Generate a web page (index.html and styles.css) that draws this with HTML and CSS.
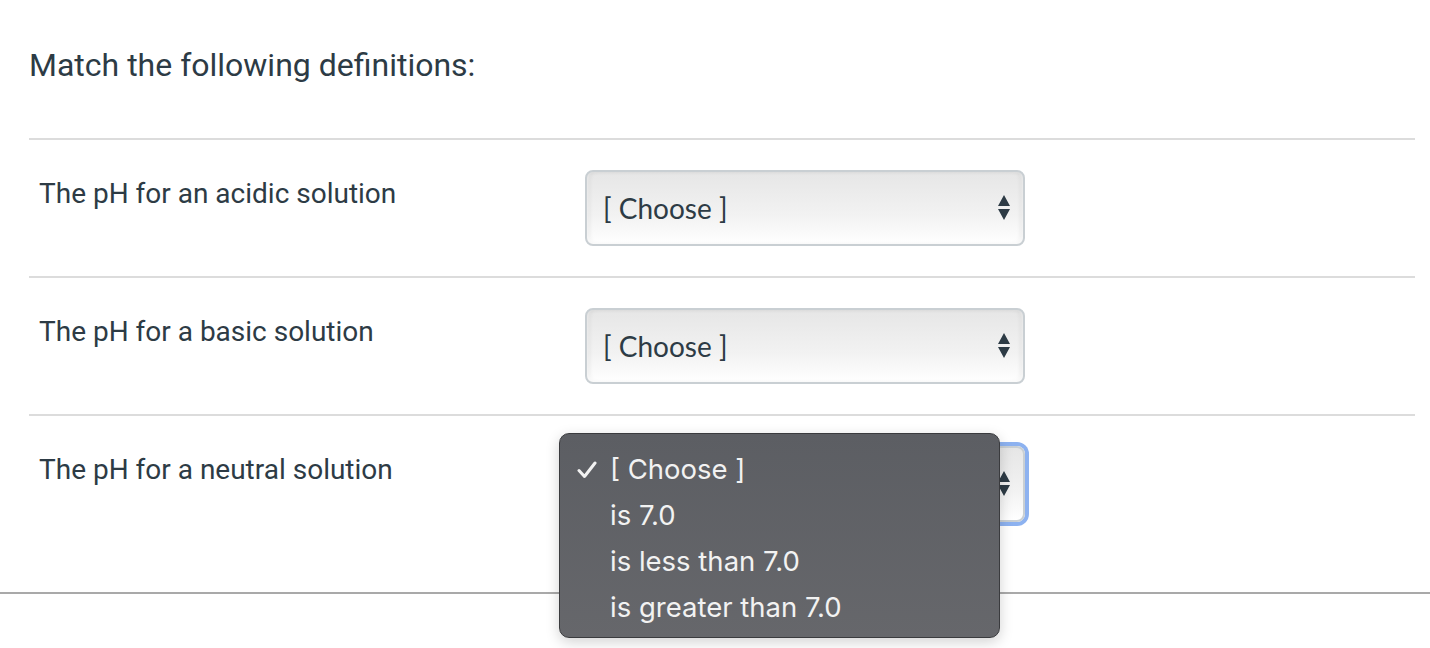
FILE: index.html
```html
<!DOCTYPE html>
<html lang="en">
<head>
<meta charset="utf-8">
<title>Match</title>
<link rel="stylesheet" href="styles.css">
</head>
<body>
<div class="question">
  <p class="prompt">Match the following definitions:</p>
  <div class="answers">
    <div class="row">
      <div class="label">The pH for an acidic solution</div>
      <div class="select-wrap">
        <div class="select"><span class="value">[ Choose ]</span><span class="arrows"><svg width="12" height="26" viewBox="0 0 12 26"><path d="M6 0 L12 11 L0 11 Z M0 14 L12 14 L6 25 Z" fill="#2d3b45"/></svg></span></div>
      </div>
    </div>
    <div class="row">
      <div class="label">The pH for a basic solution</div>
      <div class="select-wrap">
        <div class="select"><span class="value">[ Choose ]</span><span class="arrows"><svg width="12" height="26" viewBox="0 0 12 26"><path d="M6 0 L12 11 L0 11 Z M0 14 L12 14 L6 25 Z" fill="#2d3b45"/></svg></span></div>
      </div>
    </div>
    <div class="row last">
      <div class="label">The pH for a neutral solution</div>
      <div class="select-wrap">
        <div class="select focused"><span class="value hidden-under">[ Choose ]</span><span class="arrows"><svg width="12" height="26" viewBox="0 0 12 26"><path d="M6 0 L12 11 L0 11 Z M0 14 L12 14 L6 25 Z" fill="#2d3b45"/></svg></span></div>
        <div class="menu">
          <div class="opt"><svg class="check" width="20" height="18" viewBox="0 0 20 18"><path d="M2 9.5 L7.5 15.5 L18 2" fill="none" stroke="#f2f2f2" stroke-width="3" stroke-linecap="round" stroke-linejoin="round"/></svg>[ Choose ]</div>
          <div class="opt">is 7.0</div>
          <div class="opt">is less than 7.0</div>
          <div class="opt">is greater than 7.0</div>
        </div>
      </div>
    </div>
  </div>
</div>
<div class="footer-line"></div>
</body>
</html>
```

FILE: styles.css
```css
html, body {
  margin: 0;
  padding: 0;
  background: #fff;
}
body {
  font-family: Roboto, "Liberation Sans", sans-serif;
  color: #2d3b45;
  width: 1430px;
  height: 648px;
  overflow: hidden;
}
.question {
  padding: 0 15px 0 29px;
}
.prompt {
  margin: 0;
  padding-top: 46px;
  height: 138px;
  box-sizing: border-box;
  font-size: 32px;
  line-height: 38px;
}
.answers {
  border-top: 2px solid #dcdcdc;
}
.row {
  display: flex;
  align-items: flex-start;
  height: 136px;
  border-bottom: 2px solid #dcdcdc;
}
.row.last {
  border-bottom: none;
  height: 176px;
}
.label {
  width: 546px;
  padding: 38px 0 0 10px;
  font-size: 28px;
  line-height: 32px;
}
.select-wrap {
  position: relative;
  margin-top: 30px;
}
.select {
  box-sizing: border-box;
  width: 440px;
  height: 76px;
  border: 2px solid #c9cfd3;
  border-radius: 8px;
  background: linear-gradient(#e6e6e6, #f2f2f2 60%, #ffffff);
  box-shadow: inset 0 -2px 4px rgba(255,255,255,0.8), inset -3px 0 4px rgba(0,0,0,0.06), inset 3px 0 4px rgba(0,0,0,0.06);
  display: flex;
  align-items: center;
  justify-content: space-between;
  padding: 0 12px 0 16px;
}
.value {
  font-family: Lato, "Liberation Sans", sans-serif;
  font-size: 28px;
  color: #2d3b45;
}
.value.hidden-under {
  visibility: hidden;
}
.arrows {
  display: flex;
  align-items: center;
  margin-right: 1px;
}
.select.focused {
  box-shadow: 0 0 0 4px #8db2f0;
}
.menu {
  position: absolute;
  left: -26px;
  top: -13px;
  width: 441px;
  height: 205px;
  box-sizing: border-box;
  border: 1px solid #3a3b3e;
  border-radius: 10px;
  background: linear-gradient(#5c5e63, #66676b);
  box-shadow: 0 4px 14px rgba(0,0,0,0.18);
  padding-top: 15px;
  font-family: Inter, Roboto, "Liberation Sans", sans-serif;
  color: #f2f2f2;
  font-size: 27.5px;
}
.opt {
  height: 46px;
  line-height: 40px;
  padding-left: 50px;
  position: relative;
}
.check {
  position: absolute;
  left: 17px;
  top: 12px;
}
.footer-line {
  border-top: 2px solid #a9a9a9;
  margin-top: 0;
}
```
